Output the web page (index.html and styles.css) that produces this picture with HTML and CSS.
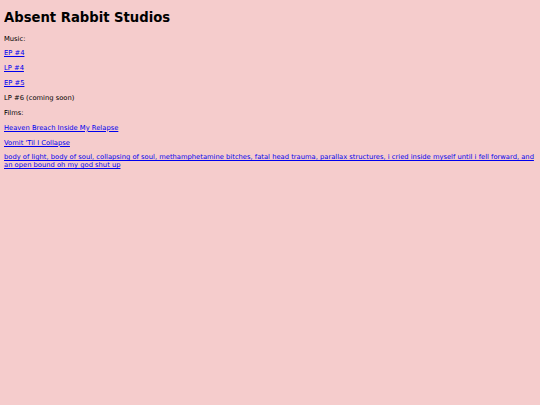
FILE: index.html
```html
<!DOCTYPE html>
<html lang="en">
<head>
  <meta charset="UTF-8">
  <title>Absent Rabbit Studios</title>
  <link rel="stylesheet" href="styles.css">
</head>
<body>

<h1>Absent Rabbit Studios</h1>

<p>Music:</p>
<p><a href="#">EP #4</a></p>
<p><a href="#">LP #4</a></p>
<p><a href="#">EP #5</a></p>
<p>LP #6 (coming soon)</p>

<p>Films:</p>
<p><a href="#">Heaven Breach Inside My Relapse</a></p>
<p><a href="#">Vomit 'Til I Collapse</a></p>
<p><a href="#">body of light, body of soul, collapsing of soul, methamphetamine bitches, fatal head trauma, parallax structures, i cried inside myself until i fell forward, and an open bound oh my god shut up</a></p>

</body>
</html>
```

FILE: styles.css
```css
body {
  background-color: #f5cccc;
  font-family: "DejaVu Sans", Verdana, sans-serif;
  font-size: 6.75px;
  color: #000;
  margin: 4px;
}

h1 {
  font-size: 13.2px;
  margin: 6px 0 9.6px;
}

p {
  margin: 6.85px 0;
}

a {
  color: #0000ee;
}
```
